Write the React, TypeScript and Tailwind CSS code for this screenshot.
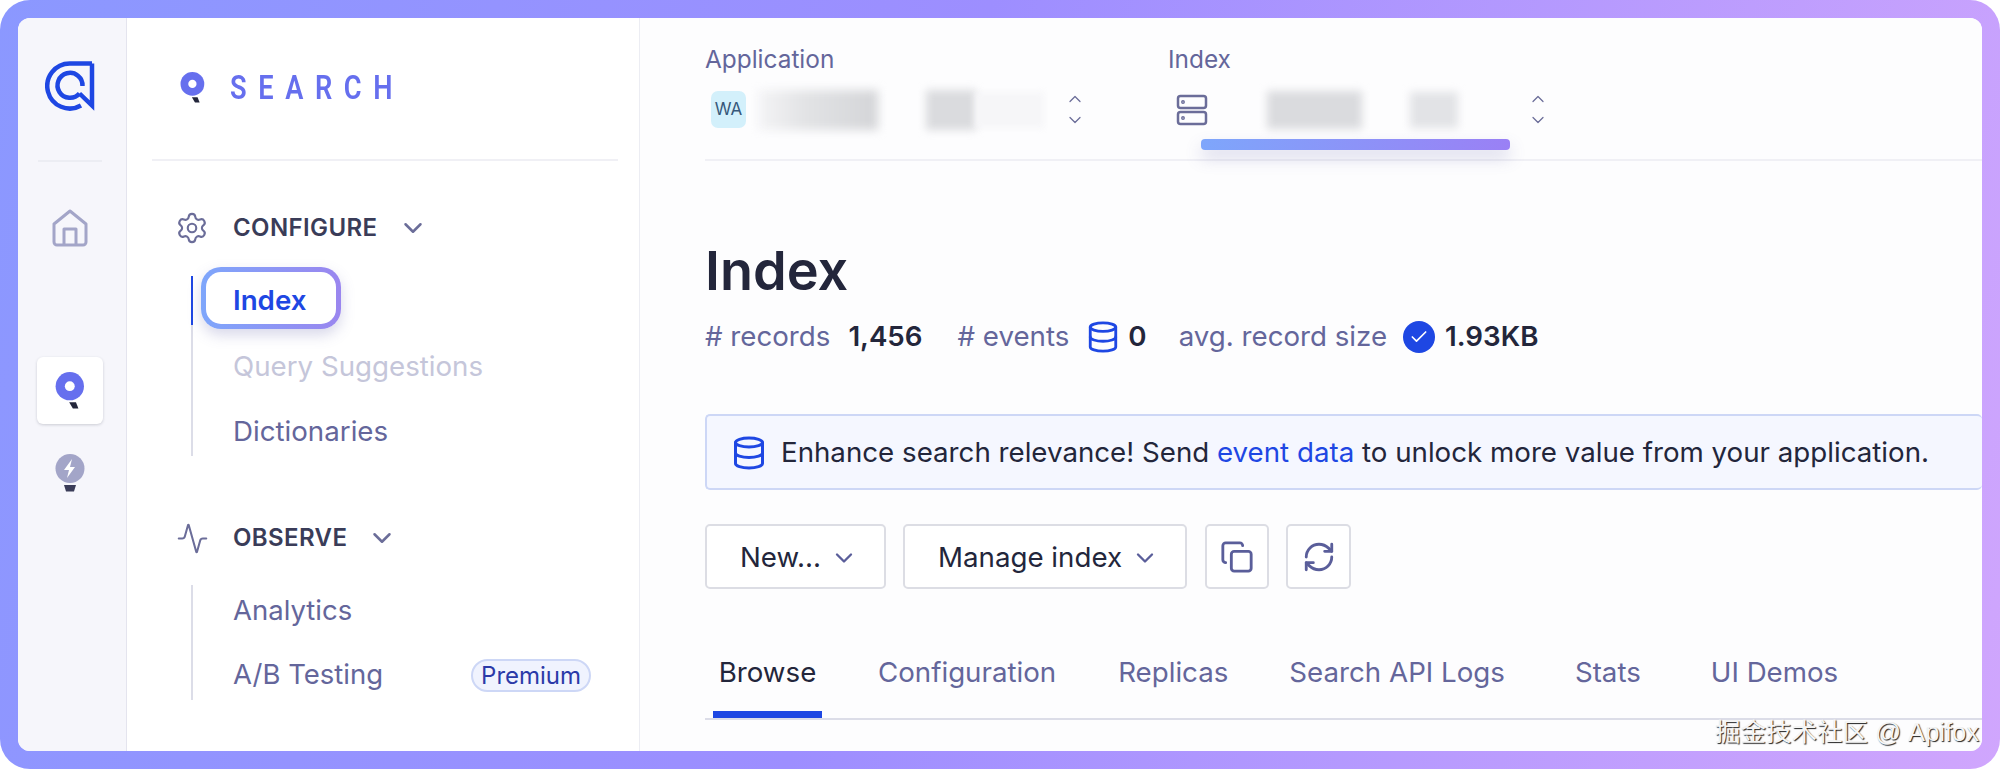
import { ChevronDown, ChevronUp, Copy, RefreshCw, Settings, Activity, Database, Check } from 'lucide-react';

function AlgoliaLogo() {
  return (
    <svg width="50" height="50" viewBox="0 0 50 50" fill="none" stroke="#1e47e3" strokeWidth="4.500">
      <path d="M47 2.500H25A22.500 22.500 0 1 0 36 44.500" />
      <path d="M47 2.500V44.500L34.500 32.500" strokeLinejoin="miter" />
      <path d="M34.500 32.500A12.500 12.500 0 1 1 37.500 25" />
    </svg>
  );
}

function SearchPin({ size = 30 }: { size?: number }) {
  return (
    <svg width={size * 0.8} height={size} viewBox="0 0 24 30" className="shrink-0">
      <circle cx="12" cy="11.500" r="11.500" fill="#666fee" />
      <circle cx="12" cy="11.500" r="4" fill="#fff" />
      <path d="M11.500 24.500h5.500l2 5h-4.500z" fill="#23263b" />
    </svg>
  );
}

function BoltPin() {
  return (
    <svg width="30" height="38" viewBox="0 0 30 38">
      <circle cx="15" cy="14.500" r="14.500" fill="#a3a5c8" />
      <path d="M17 5l-8 11h5l-2 8 8-11h-5z" fill="#fff" />
      <path d="M9 31h12l-2 6.500h-8z" fill="#3a3c58" />
    </svg>
  );
}

function HomeIcon() {
  return (
    <svg width="36" height="38" viewBox="0 0 36 38" fill="none" stroke="#a3a5c8" strokeWidth="3" strokeLinejoin="round">
      <path d="M2 15L18 2l16 13v18a3 3 0 0 1-3 3H5a3 3 0 0 1-3-3z" />
      <path d="M12 36V20h12v16" />
    </svg>
  );
}

function ServerIcon() {
  return (
    <svg width="32" height="32" viewBox="0 0 32 32" fill="none" stroke="#6b6d99" strokeWidth="2.500">
      <rect x="2" y="2" width="28" height="12" rx="2.500" />
      <rect x="2" y="18" width="28" height="12" rx="2.500" />
      <circle cx="7" cy="8" r="0.700" />
      <circle cx="7" cy="24" r="0.700" />
    </svg>
  );
}

function UpDown() {
  return (
    <div className="flex flex-col items-center gap-[1px] text-[#6b6d99]">
      <ChevronUp size={20} strokeWidth={1.500} />
      <ChevronDown size={20} strokeWidth={1.500} />
    </div>
  );
}

function NavGroupHead({ icon, label }: { icon: React.ReactNode; label: string }) {
  return (
    <div className="flex items-center h-[30px]">
      <div className="w-[28px] flex justify-center text-[#6b6d99]">{icon}</div>
      <span className="ml-[27px] mr-[20px] text-[24px] font-semibold tracking-[0.4px] text-[#3a3c58]">{label}</span>
      <ChevronDown size={30} strokeWidth={2} className="text-[#6b6d99]" />
    </div>
  );
}

const tabs = [
  { label: 'Configuration', cls: 'ml-[56px]' },
  { label: 'Replicas', cls: 'ml-[62px]' },
  { label: 'Search API Logs', cls: 'ml-[61px]' },
  { label: 'Stats', cls: 'ml-[70px]' },
  { label: 'UI Demos', cls: 'ml-[70px]' },
];

export default function App() {
  return (
    <div className="w-[2000px] h-[769px] bg-white font-['Inter',sans-serif] overflow-hidden">
      <div className="relative h-full rounded-[30px] p-[18px] bg-[linear-gradient(105deg,#8b98ff_0%,#9d8eff_45%,#d0a6fd_100%)]">
        <div className="flex h-full rounded-[12px] overflow-hidden bg-white">
          {/* icon rail */}
          <div className="w-[109px] shrink-0 bg-[#f6f6fb] border-r border-[#e4e4ee] pr-[4px] flex flex-col items-center">
            <div className="mt-[43px] h-[50px]"><AlgoliaLogo /></div>
            <div className="mt-[49px] w-[64px] h-[2px] bg-[#ecedf3]" />
            <div className="mt-[47px] h-[38px]"><HomeIcon /></div>
            <div className="mt-[110px] w-[66px] h-[67px] rounded-[6px] bg-white shadow-[0_1px_3px_rgba(35,38,59,0.2)] flex items-center justify-center">
              <SearchPin size={37} />
            </div>
            <div className="mt-[30px]"><BoltPin /></div>
          </div>

          {/* product sidebar */}
          <div className="w-[513px] shrink-0 border-r border-[#ecedf3] pl-[25px] pr-[21px]">
            <div className="h-[143px] border-b-2 border-[#f0f0f5]">
              <div className="flex items-center pt-[51px] pl-[28px]">
                <SearchPin size={31} />
                <span className="ml-[25px] text-[34px] leading-[36px] font-semibold text-[#666fee] tracking-[14.500px] font-['Roboto',sans-serif] scale-x-[0.8] origin-left">SEARCH</span>
              </div>
            </div>

            <div className="pt-[52px] pl-[26px]">
              <NavGroupHead icon={<Settings size={34} strokeWidth={1.500} className="shrink-0" />} label="CONFIGURE" />
              <div className="relative mt-[33px] ml-[13px] h-[180px] border-l-2 border-[#dcdde8] pl-[40px] flex flex-col">
                <div className="absolute -left-[2px] top-0 w-[2px] h-[49px] bg-[#1e47e3]" />
                <div className="absolute -left-[2px] -top-[9px] ml-[10px] w-[140px] h-[62px] rounded-[20px] p-[5px] bg-[linear-gradient(90deg,#7ea6fb,#9a86ef)] shadow-[0_6px_14px_rgba(100,100,170,0.25)]">
                  <div className="w-full h-full rounded-[15px] bg-white" />
                </div>
                <span className="relative h-[49px] leading-[49px] text-[27.7px] font-semibold text-[#1e47e3]">Index</span>
                <span className="mt-[16px] h-[50px] leading-[50px] text-[27.7px] text-[#c5c6da]">Query Suggestions</span>
                <span className="mt-[15px] h-[50px] leading-[50px] text-[27.7px] text-[#64669b]">Dictionaries</span>
              </div>

              <div className="mt-[67px]">
                <NavGroupHead icon={<Activity size={33} strokeWidth={1.500} className="shrink-0" />} label="OBSERVE" />
              </div>
              <div className="mt-[32px] ml-[13px] h-[115px] border-l-2 border-[#dcdde8] pl-[40px] flex flex-col">
                <span className="h-[50px] leading-[50px] text-[27.500px] text-[#64669b]">Analytics</span>
                <div className="mt-[15px] flex items-center h-[50px]">
                  <span className="text-[27.500px] text-[#64669b]">A/B Testing</span>
                  <span className="ml-[88px] h-[33px] leading-[29px] px-[8px] rounded-full border-2 border-[#cdd7f6] bg-[#f0f3fe] text-[24px] text-[#2b3aa8]">Premium</span>
                </div>
              </div>
            </div>
          </div>

          {/* main */}
          <div className="flex-1 min-w-0 pl-[65px] bg-[#fdfdfe]">
            <div className="relative h-[143px] border-b-2 border-[#f0f0f5] flex">
              <div className="w-[463px] pt-[27px]">
                <div className="text-[24.400px] leading-[28px] text-[#64669b]">Application</div>
                <div className="mt-[16px] flex items-center">
                  <div className="ml-[6px] w-[35px] h-[37px] rounded-[7px] bg-[#d3f0fb] flex items-center justify-center text-[17px] text-[#36587a]">WA</div>
                  <div className="ml-[12px] w-[120px] h-[40px] bg-[linear-gradient(90deg,#f4f4f6,#e2e3e5_40%,#d4d5d8)] blur-[5px]" />
                  <div className="ml-[48px] w-[50px] h-[40px] bg-[#dadbde] blur-[4px]" />
                  <div className="w-[68px] h-[36px] bg-[#f6f6f8] blur-[3px]" />
                  <div className="ml-[21px]"><UpDown /></div>
                </div>
              </div>
              <div className="pt-[27px]">
                <div className="text-[24.400px] leading-[28px] text-[#64669b]">Index</div>
                <div className="mt-[16px] flex items-center">
                  <div className="ml-[8px]"><ServerIcon /></div>
                  <div className="ml-[59px] w-[95px] h-[38px] bg-[#dadbde] blur-[4px]" />
                  <div className="ml-[48px] w-[48px] h-[36px] bg-[#e2e3e6] blur-[4px]" />
                  <div className="ml-[70px]"><UpDown /></div>
                </div>
              </div>
              <div className="absolute left-[496px] top-[121px] w-[309px] h-[11px] rounded-[4px] bg-[linear-gradient(90deg,#7ea6fb,#9a80f5)] shadow-[0_8px_16px_rgba(100,100,170,0.25)]" />
            </div>

            <h1 className="mt-[79px] text-[54px] leading-[62px] font-semibold text-[#23263b]">Index</h1>

            <div className="mt-[17px] h-[36px] flex items-center text-[27.7px] text-[#64669b] whitespace-nowrap">
              <span># records</span>
              <span className="ml-[18px] font-semibold text-[#23263b]">1,456</span>
              <span className="ml-[35px]"># events</span>
              <Database size={34} strokeWidth={2} className="ml-[17px] text-[#1e47e3]" />
              <span className="ml-[8px] font-semibold text-[#23263b]">0</span>
              <span className="ml-[32px]">avg. record size</span>
              <span className="ml-[16px] w-[32px] h-[32px] rounded-full bg-[#1e47e3] flex items-center justify-center">
                <Check size={20} strokeWidth={2} className="text-white" />
              </span>
              <span className="ml-[10px] font-semibold text-[#23263b]">1.93KB</span>
            </div>

            <div className="mt-[59px] h-[76px] rounded-[5px] border-2 border-r-0 border-[#cdd7f6] bg-[#f5f7ff] flex items-center pl-[24px] pt-[2px] whitespace-nowrap text-[27.7px] text-[#23263b]">
              <Database size={36} strokeWidth={2} className="text-[#1e47e3]" />
              <span className="ml-[14px]">Enhance search relevance! Send <span className="text-[#1e47e3]">event data</span> to unlock more value from your application.</span>
            </div>

            <div className="mt-[34px] flex items-center gap-[18px] text-[27.7px] text-[#23263b]">
              <div className="w-[181px] h-[65px] rounded-[5px] border-2 border-[#dcdde4] bg-white flex items-center pl-[33px] pt-[2px]">
                <span>New...</span>
                <ChevronDown size={28} strokeWidth={2} className="ml-[9px] text-[#5a5e9a]" />
              </div>
              <div className="-ml-[1px] w-[284px] h-[65px] rounded-[5px] border-2 border-[#dcdde4] bg-white flex items-center pl-[33px] pt-[2px]">
                <span>Manage index</span>
                <ChevronDown size={28} strokeWidth={2} className="ml-[9px] text-[#5a5e9a]" />
              </div>
              <div className="w-[64px] h-[65px] rounded-[5px] border-2 border-[#dcdde4] bg-white flex items-center justify-center text-[#5a5e9a]">
                <Copy size={34} strokeWidth={2} />
              </div>
              <div className="-ml-[1px] w-[65px] h-[65px] rounded-[5px] border-2 border-[#dcdde4] bg-white flex items-center justify-center text-[#5a5e9a]">
                <RefreshCw size={34} strokeWidth={2} />
              </div>
            </div>

            <div className="mt-[61px] h-[70px] border-b-2 border-[#dcdde8] flex items-start text-[27.7px] text-[#64669b] whitespace-nowrap">
              <div className="ml-[8px] w-[109px] h-[68px] border-b-[7px] border-[#1e47e3] text-center text-[#23263b] leading-[45px]">Browse</div>
              {tabs.map(t => (
                <span key={t.label} className={`${t.cls} leading-[45px]`}>{t.label}</span>
              ))}
            </div>
          </div>
        </div>
        <span className="absolute right-[21px] bottom-[23px] text-[25.500px] leading-[28px] text-[#f5f5f5] [text-shadow:1px_1px_1px_#222] font-['Liberation_Sans','Noto_Sans_CJK_SC',sans-serif]">掘金技术社区 @ Apifox</span>
      </div>
    </div>
  );
}
